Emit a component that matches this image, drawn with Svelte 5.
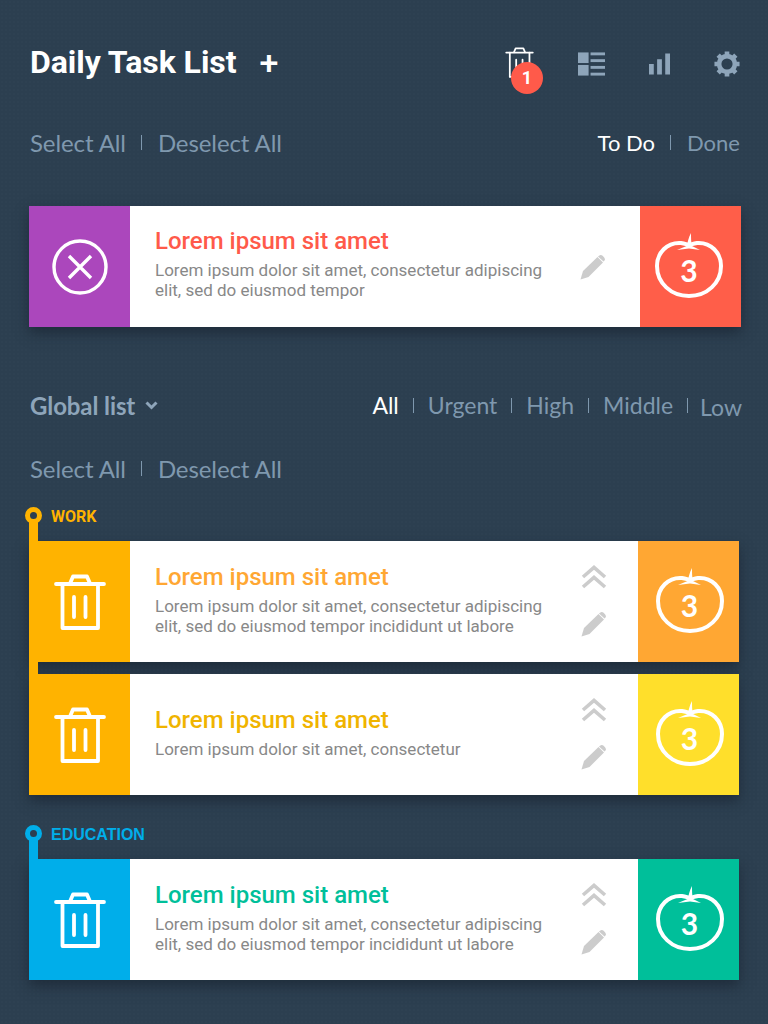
<script>
  const filters = ["All", "Urgent", "High", "Middle", "Low"];
  const lorem = "Lorem ipsum dolor sit amet, consectetur adipiscing";
  const groups = [
    {
      name: "WORK",
      color: "#ffb300",
      tasks: [
        { side: "#ffb300", title: "#ffa733", tomato: "#ffa733", lines: [lorem, "elit, sed do eiusmod tempor incididunt ut labore"] },
        { side: "#ffb300", title: "#f0b400", tomato: "#ffdf2b", lines: ["Lorem ipsum dolor sit amet, consectetur"] }
      ]
    },
    {
      name: "EDUCATION",
      color: "#00aeea",
      tasks: [
        { side: "#00aeea", title: "#00bf9a", tomato: "#00bf9a", lines: [lorem, "elit, sed do eiusmod tempor incididunt ut labore"] }
      ]
    }
  ];
</script>

{#snippet trash(w, h, sw)}
  <svg width={w} height={h} viewBox="0 0 52 56" fill="none" stroke="#fff" stroke-width={sw} stroke-linecap="round" stroke-linejoin="round">
    <path d="M2 10H50" />
    <path d="M16 9.500 L19 2.500 H33 L36 9.500" />
    <path d="M8.500 10 V54 H44 V10" />
    <path d="M20 23 V43 M31.500 23 V43" />
  </svg>
{/snippet}

{#snippet pencil()}
  <svg width="26" height="26" viewBox="0 0 26 26" fill="#ccc">
    <path d="M0.500 25.500 L3 17 L17.500 3 L23 8.500 L8.500 23 Z" />
    <path d="M19 1.800 a2.600 2.600 0 0 1 3.600 0 l1.600 1.600 a2.600 2.600 0 0 1 0 3.600 L23.500 7.500 L18 2.500 Z" />
  </svg>
{/snippet}

{#snippet chevrons()}
  <svg width="26" height="24" viewBox="0 0 26 24" fill="none" stroke="#ccc" stroke-width="3.600">
    <path d="M2 12 L13 2.500 L24 12" />
    <path d="M2 22 L13 12.500 L24 22" />
  </svg>
{/snippet}

{#snippet tomato()}
  <div class="tomato">
    <svg width="68" height="66" viewBox="0 0 68 66" fill="none" stroke="#fff" stroke-width="4">
      <path d="M26 10 C12 9 2 20 2 33 C2 50 16 63 34 63 C52 63 66 50 66 33 C66 20 56 9 42 10 C39 10.500 36 11.500 34 12 C32 11.500 29 10.500 26 10 Z" />
      <path d="M36 0 C33.500 4 33 9 31.500 13 L22 17 L34 15.500 L45 17 L37 13 C36 9 36 5 36 0 Z" fill="#fff" stroke="none" />
    </svg>
    <span>3</span>
  </div>
{/snippet}

<div class="page">
  <header>
    <h1>Daily Task List</h1>
    <span class="plus">+</span>
    <div class="tools">
      <div class="bin">
        {@render trash(29, 31, 3.200)}
        <b class="badge">1</b>
      </div>
      <svg width="27" height="24" viewBox="0 0 28 24" fill="#8ea5ba">
        <rect x="0" y="0" width="11" height="11" />
        <rect x="0" y="13" width="11" height="11" />
        <rect x="13" y="0" width="15" height="3" />
        <rect x="13" y="7" width="15" height="3" />
        <rect x="13" y="14" width="15" height="3" />
        <rect x="13" y="21" width="15" height="3" />
      </svg>
      <svg width="21" height="22" viewBox="0 0 22 22" fill="#8ea5ba">
        <rect x="0" y="11" width="5" height="11" />
        <rect x="8.500" y="6" width="5" height="16" />
        <rect x="17" y="0" width="5" height="22" />
      </svg>
      <svg width="26" height="26" viewBox="0 0 28 28" fill="none" stroke="#8ea5ba">
        <circle cx="14" cy="14" r="8.500" stroke-width="5" />
        <path d="M14 0.500V5 M14 23V27.500 M0.500 14H5 M23 14H27.500 M4.500 4.500L7.600 7.600 M20.400 20.400L23.500 23.500 M4.500 23.500L7.600 20.400 M20.400 7.600L23.500 4.500" stroke-width="5" />
      </svg>
    </div>
  </header>

  <div class="links first">
    <div class="pipes">
      <span>Select All</span><i></i><span>Deselect All</span>
    </div>
    <div class="pipes small todo">
      <span class="on">To Do</span><i></i><span>Done</span>
    </div>
  </div>

  <section class="card active">
    <div class="side purple">
      <svg width="56" height="56" viewBox="0 0 56 56" fill="none" stroke="#fff" stroke-width="3.400">
        <circle cx="28" cy="28" r="26" />
        <path d="M17 17 L39 39 M39 17 L17 39" />
      </svg>
    </div>
    <div class="body">
      <h2 style="color:#ff5a4a">Lorem ipsum sit amet</h2>
      <p>Lorem ipsum dolor sit amet, consectetur adipiscing<br />elit, sed do eiusmod tempor</p>
    </div>
    <div class="acts solo">{@render pencil()}</div>
    <div class="side" style="background:#ff5e49">{@render tomato()}</div>
  </section>

  <div class="links global">
    <div class="drop">
      <strong>Global list</strong>
      <svg width="13" height="9" viewBox="0 0 13 9" fill="none" stroke="#8ea5ba" stroke-width="3"><path d="M1.500 1.500 L6.500 6.500 L11.500 1.500" /></svg>
    </div>
    <div class="pipes small filters">
      {#each filters as f, i}
        {#if i > 0}<i></i>{/if}
        <span class:on={i === 0} class:low={f === "Low"}>{f}</span>
      {/each}
    </div>
  </div>

  <div class="links second">
    <div class="pipes">
      <span>Select All</span><i></i><span>Deselect All</span>
    </div>
  </div>

  {#each groups as g}
    <div class="group" class:edu={g.name === "EDUCATION"} style="--c:{g.color}">
      <div class="label"><em></em>{g.name}</div>
      {#each g.tasks as t}
        <section class="card">
          <div class="side" style="background:{t.side}">{@render trash(52, 56, 3.800)}</div>
          <div class="body">
            <h2 style="color:{t.title}">Lorem ipsum sit amet</h2>
            <p>{#each t.lines as l, i}{#if i > 0}<br />{/if}{l}{/each}</p>
          </div>
          <div class="acts">
            {@render chevrons()}
            {@render pencil()}
          </div>
          <div class="side" style="background:{t.tomato}">{@render tomato()}</div>
        </section>
      {/each}
    </div>
  {/each}
</div>

<style>
  :global(body) {
    margin: 0;
    background: #2c3f50;
  }
  .page {
    box-sizing: border-box;
    width: 768px;
    height: 1024px;
    overflow: hidden;
    padding: 0 29px;
    background-color: #2c3f50;
    background-image: radial-gradient(rgba(255, 255, 255, 0.012) 1px, transparent 1px);
    background-size: 4px 4px;
    font-family: Lato, sans-serif;
  }
  header {
    display: flex;
    align-items: center;
    height: 46px;
    padding: 39px 0 0 1px;
    color: #fff;
  }
  h1 {
    margin: 0;
    font: 700 32px/46px Roboto, sans-serif;
    letter-spacing: -0.05px;
  }
  .plus {
    margin-left: 23px;
    font: 500 34px/46px Roboto, sans-serif;
  }
  .tools {
    margin-left: auto;
    margin-right: -1px;
    padding-top: 3px;
    display: flex;
    align-items: center;
    gap: 44px;
  }
  .bin {
    position: relative;
    height: 31px;
    margin-top: -2px;
  }
  .badge {
    position: absolute;
    left: 6px;
    top: 15px;
    width: 32px;
    height: 32px;
    border-radius: 50%;
    background: #ff5a4a;
    font: 700 18px/32px Roboto, sans-serif;
    text-align: center;
  }
  .links {
    display: flex;
    justify-content: space-between;
    align-items: center;
    height: 30px;
    padding-left: 1px;
    color: #7f98ae;
    font-size: 24px;
    letter-spacing: -0.1px;
  }
  .first {
    margin-top: 42px;
  }
  .pipes {
    display: flex;
    align-items: center;
  }
  .small {
    font-size: 23px;
    letter-spacing: 0;
  }
  .pipes i {
    width: 1px;
    height: 15px;
    margin: 0 16px 0 15px;
    background: #7f98ae;
  }
  .todo {
    font-size: 22px;
    margin-right: -1px;
  }
  .filters i {
    margin: 0 14px;
  }
  .on {
    color: #fff;
  }
  .low {
    margin: 4px 0 0 -2px;
  }
  .card {
    display: flex;
    height: 121px;
    margin-bottom: 12px;
    background: #fff;
    box-shadow: 0 6px 12px rgba(20, 30, 42, 0.55);
    position: relative;
  }
  .active {
    width: 712px;
    margin-top: 49px;
    margin-bottom: 0;
  }
  .side {
    flex: 0 0 101px;
    display: flex;
    align-items: center;
    justify-content: center;
  }
  .purple {
    background: #ab47bc;
  }
  .body {
    flex: 1;
    box-sizing: border-box;
    padding: 0 0 7px 25px;
    min-width: 0;
    display: flex;
    flex-direction: column;
    justify-content: center;
  }
  .group .body {
    padding-bottom: 5px;
  }
  h2 {
    margin: 0;
    font: 500 24px/30px Roboto, sans-serif;
  }
  p {
    margin: 4px 0 0;
    color: #888;
    font: 400 17px/20px Roboto, sans-serif;
    white-space: nowrap;
  }
  .acts {
    flex: 0 0 88px;
    box-sizing: border-box;
    padding: 0 0 1px;
    display: flex;
    flex-direction: column;
    align-items: center;
    justify-content: center;
    gap: 22px;
  }
  .solo {
    padding: 0 26px 0 0;
    flex-basis: 69px;
  }
  .tomato {
    position: relative;
    width: 68px;
    height: 66px;
    margin-top: -2px;
    color: #fff;
  }
  .active .tomato {
    margin-right: 3px;
  }
  .group .tomato {
    margin-left: 2px;
  }
  .tomato span {
    position: absolute;
    left: 0;
    right: 0;
    top: 19px;
    text-align: center;
    font: 700 30px/36px Lato, sans-serif;
  }
  .global {
    margin-top: 63px;
  }
  .drop {
    display: flex;
    align-items: center;
    gap: 10px;
    color: #8ea5ba;
  }
  .drop strong {
    font-weight: 700;
  }
  .filters {
    margin-right: -3px;
  }
  .second {
    margin-top: 33px;
    margin-bottom: 6px;
  }
  .group {
    position: relative;
    width: 710px;
    color: var(--c);
    padding-top: 17px;
  }
  .group::before {
    content: "";
    position: absolute;
    z-index: 2;
    left: 0;
    top: 30px;
    bottom: 40px;
    width: 9px;
    background: var(--c);
  }
  .label {
    position: relative;
    z-index: 3;
    height: 35px;
    padding-left: 22px;
    font: 700 16px/22px Roboto, sans-serif;
  }
  .edu .label {
    font-family: "Liberation Sans", sans-serif;
  }
  .label em {
    position: absolute;
    left: -4px;
    top: 1px;
    width: 7px;
    height: 7px;
    border: 5px solid var(--c);
    border-radius: 50%;
    background: #2c3f50;
  }
</style>
